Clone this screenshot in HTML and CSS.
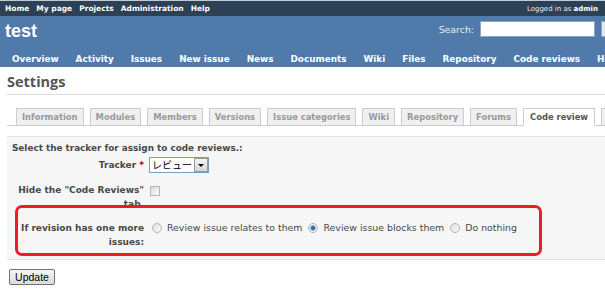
FILE: index.html
```html
<!DOCTYPE html>
<html lang="en">
  <head>
    <meta charset="UTF-8" />
    <title>Settings - test</title>
    <link rel="stylesheet" href="styles.css">
  </head>

  <body>
    <div class="page">
      <div id="top-menu">
        <ul class="top-links">
          <li><a href="#">Home</a></li>
          <li><a href="#">My page</a></li>
          <li><a href="#">Projects</a></li>
          <li><a href="#">Administration</a></li>
          <li><a href="#">Help</a></li>
        </ul>
        <div id="loggedas">Logged in as <b>admin</b></div>
      </div>

      <div id="header">
        <div class="header-row">
          <h1>test</h1>
          <div id="quick-search">
            <label for="q">Search:</label>
            <input type="text" id="q" name="q" />
            <span class="jump"></span>
          </div>
        </div>
        <ul id="main-menu">
          <li><a href="#">Overview</a></li>
          <li><a href="#">Activity</a></li>
          <li><a href="#">Issues</a></li>
          <li><a href="#">New issue</a></li>
          <li><a href="#">News</a></li>
          <li><a href="#">Documents</a></li>
          <li><a href="#">Wiki</a></li>
          <li><a href="#">Files</a></li>
          <li><a href="#">Repository</a></li>
          <li><a href="#">Code reviews</a></li>
          <li><a href="#">Help</a></li>
        </ul>
      </div>

      <div id="content">
        <h2>Settings</h2>

        <ul class="tabs">
          <li><a href="#">Information</a></li>
          <li><a href="#">Modules</a></li>
          <li><a href="#">Members</a></li>
          <li><a href="#">Versions</a></li>
          <li><a href="#">Issue categories</a></li>
          <li><a href="#">Wiki</a></li>
          <li><a href="#">Repository</a></li>
          <li><a href="#">Forums</a></li>
          <li><a href="#" class="selected">Code review</a></li>
          <li><a href="#">&nbsp;</a></li>
        </ul>

        <form action="#" method="post">
          <div class="box">
            <p class="intro">Select the tracker for assign to code reviews.:</p>

            <div class="row">
              <label>Tracker <span class="required">*</span></label>
              <span class="select">
                <span class="select-value">レビュー</span>
                <span class="select-arrow"></span>
              </span>
            </div>

            <div class="row row-top">
              <label for="hide_tab">Hide the "Code Reviews" tab.</label>
              <input type="checkbox" id="hide_tab" class="check" />
            </div>

            <div class="row row-top">
              <label>If revision has one more issues:</label>
              <div class="choices">
                <input type="radio" name="auto_relation" id="rel1" class="radio" />
                <label for="rel1">Review issue relates to them</label>
                <input type="radio" name="auto_relation" id="rel2" class="radio" checked />
                <label for="rel2">Review issue blocks them</label>
                <input type="radio" name="auto_relation" id="rel3" class="radio" />
                <label for="rel3">Do nothing</label>
              </div>
            </div>
          </div>

          <button type="submit" class="update">Update</button>
        </form>
      </div>

      <!-- red annotation drawn over the screenshot -->
      <div class="highlight"></div>
    </div>
  </body>
</html>
```

FILE: styles.css
```css
:root {
  --color-top: #2c4056;
  --color-header: #507aaa;
  --color-text: #484848;
  --color-tab-text: #999999;
  --color-tab-border: #cccccc;
  --color-box: #f6f6f6;
  --color-box-border: #e4e4e4;
  --color-mark: #ec1b24;
}

html,
body {
  margin: 0;
  overflow: hidden;
}

body {
  font-family: "DejaVu Sans", Verdana, sans-serif;
  font-size: 9.4px;
  color: var(--color-text);
  background-color: #ffffff;
}

ul {
  list-style: none;
  margin: 0;
  padding: 0;
}

a {
  text-decoration: none;
}

.page {
  position: relative;
  width: 640px;
}

/* Top menu */
#top-menu {
  display: flex;
  align-items: center;
  height: 15px;
  border-top: 1px solid #c3ccd6;
  padding-left: 5px;
  background-color: var(--color-top);
  color: #ffffff;
  font-size: 7.5px;
}

.top-links {
  display: flex;
  gap: 7px;
}

.top-links a {
  color: #ffffff;
  font-weight: bold;
}

#loggedas {
  margin-left: auto;
  padding-right: 42px;
  color: #e8ecf0;
  font-size: 7px;
}

#loggedas b {
  color: #ffffff;
}

/* Header */
#header {
  display: flex;
  flex-direction: column;
  height: 47px;
  padding: 4px 0 0 5px;
  background-color: var(--color-header);
  color: #f8f8f8;
}

.header-row {
  display: flex;
  align-items: flex-start;
}

#header h1 {
  flex: 1;
  margin: 0;
  font-family: "Liberation Sans", Arial, sans-serif;
  font-size: 18px;
  line-height: 22px;
  font-weight: bold;
  color: #ffffff;
}

#quick-search {
  display: flex;
  align-items: center;
  gap: 6px;
  margin-top: 1px;
  color: #e6ecf4;
}

#quick-search input {
  width: 113px;
  height: 14px;
  margin: 0;
  padding: 0;
  border: 1px solid #8aa6c6;
  background-color: #ffffff;
}

.jump {
  display: block;
  width: 37px;
  height: 14px;
  border: 1px solid #8aa6c6;
  background-color: #e8e8e8;
}

#main-menu {
  display: flex;
  gap: 17px;
  margin-top: auto;
  padding-left: 7px;
  height: 16px;
  line-height: 16px;
  font-size: 8.85px;
  font-weight: bold;
}

#main-menu a {
  color: #ffffff;
  white-space: nowrap;
}

/* Content */
#content {
  padding-left: 7px;
}

h2 {
  margin: 6px 0 0;
  padding-bottom: 3px;
  border-bottom: 1px solid #dddddd;
  font-family: "Open Sans", "DejaVu Sans", sans-serif;
  font-size: 14.5px;
  line-height: 18px;
  font-weight: bold;
  color: #555555;
}

.tabs {
  display: flex;
  gap: 6px;
  margin-top: 13px;
  padding-left: 9px;
  border-bottom: 1px solid var(--color-tab-border);
}

.tabs li {
  margin-bottom: -1px;
}

.tabs a {
  display: block;
  padding: 0 5px;
  height: 16px;
  line-height: 16px;
  border: 1px solid var(--color-tab-border);
  background-color: #f0f0f0;
  color: var(--color-tab-text);
  font-size: 8.4px;
  font-weight: bold;
  white-space: nowrap;
}

.tabs a.selected {
  padding: 0 6px;
  background-color: #ffffff;
  border-bottom-color: #ffffff;
  color: #555555;
}

form {
  margin: 0;
}

.box {
  margin-top: 10px;
  padding: 4px 5px 10px;
  border-top: 1px solid var(--color-box-border);
  border-bottom: 1px solid #dddddd;
  background-color: var(--color-box);
  font-weight: normal;
}

.intro {
  margin: 0;
  line-height: 14px;
  font-weight: bold;
  font-size: 8.85px;
}

.row {
  display: flex;
  align-items: center;
  margin-top: 2px;
}

.row-top {
  align-items: flex-start;
  margin-top: 10px;
}

.row > label {
  flex: none;
  width: 132px;
  margin-right: 5px;
  text-align: right;
  font-size: 9px;
  font-weight: bold;
  line-height: 14px;
}

.required {
  color: #bb0000;
}

/* Tracker select */
.select {
  display: flex;
  align-items: stretch;
  height: 14px;
  border: 1px solid #7f9db9;
  background-color: #ffffff;
}

.select-value {
  padding: 0 2px 0 2px;
  font-family: "Noto Sans CJK JP", sans-serif;
  font-size: 10px;
  line-height: 14px;
  color: #000000;
}

.select-arrow {
  position: relative;
  width: 12px;
  border: 1px solid #9a9a9a;
  background: linear-gradient(#f4f4f4, #d6d6d6);
}

.select-arrow::after {
  content: "";
  position: absolute;
  left: 3px;
  top: 5px;
  border-left: 3px solid transparent;
  border-right: 3px solid transparent;
  border-top: 3px solid #000000;
}

/* Checkbox & radios */
.check,
.radio {
  appearance: none;
  flex: none;
  width: 10px;
  height: 10px;
  margin: 3px 0 0 1px;
  border: 1px solid #b5b5b5;
  background: linear-gradient(135deg, #dcdcdc, #fbfbfb);
}

.radio {
  border-radius: 50%;
  margin: 0 5px 0 6px;
}

.radio:first-child {
  margin-left: 3px;
}

.radio:checked {
  background: radial-gradient(circle, #1e5b98 0, #3f86c4 2px, #e9e9e9 3px, #fafafa 5px);
}

.choices {
  display: flex;
  align-items: center;
  height: 14px;
  white-space: nowrap;
}

.choices label {
  line-height: 14px;
}

/* Submit */
.update {
  display: block;
  margin: 9px 0 0 2px;
  width: 46px;
  height: 16px;
  padding: 0;
  border: 1px solid #707070;
  border-radius: 2px;
  background: linear-gradient(#f6f6f6, #dcdcdc);
  font-family: "Liberation Sans", Arial, sans-serif;
  font-size: 10.5px;
  color: #000000;
}

/* Annotation overlay */
.highlight {
  position: absolute;
  left: 15px;
  top: 205px;
  width: 521px;
  height: 45px;
  border: 3px solid var(--color-mark);
  border-radius: 7px;
  pointer-events: none;
}
```
